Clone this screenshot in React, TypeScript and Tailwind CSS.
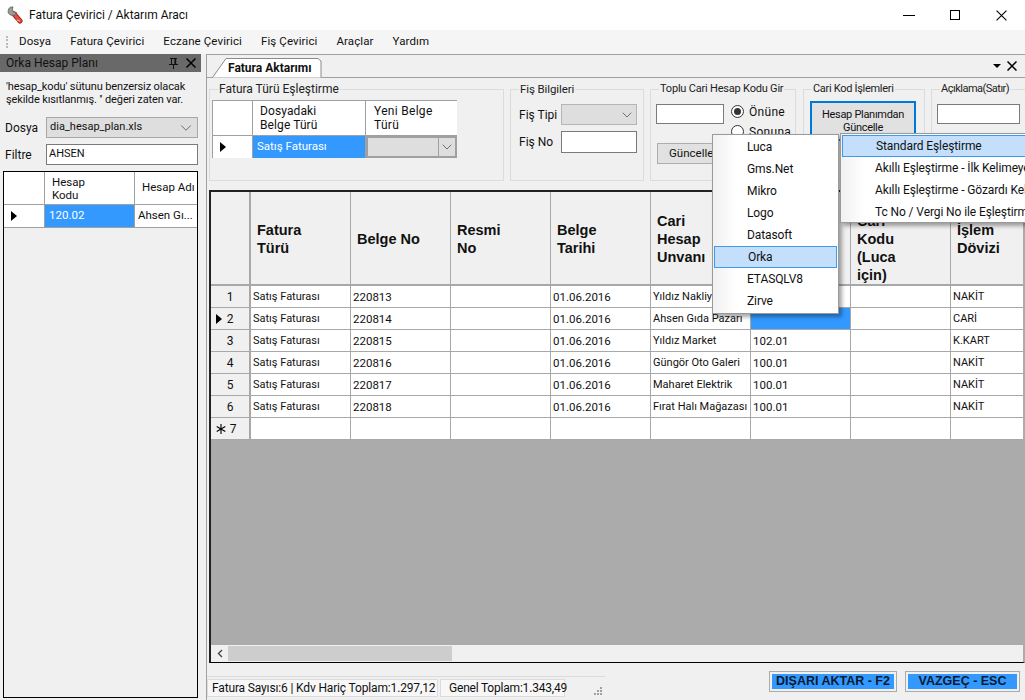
import { ChevronDown } from "lucide-react"

const menu = ["Dosya", "Fatura Çevirici", "Eczane Çevirici", "Fiş Çevirici", "Araçlar", "Yardım"]

const rows = [
  { n: "1", no: "220813", name: "Yıldız Nakliyat", code: "", doviz: "NAKİT" },
  { n: "2", no: "220814", name: "Ahsen Gıda Pazarı", code: "", doviz: "CARİ" },
  { n: "3", no: "220815", name: "Yıldız Market", code: "102.01", doviz: "K.KART" },
  { n: "4", no: "220816", name: "Güngör Oto Galeri", code: "100.01", doviz: "NAKİT" },
  { n: "5", no: "220817", name: "Maharet Elektrik", code: "100.01", doviz: "NAKİT" },
  { n: "6", no: "220818", name: "Fırat Halı Mağazası", code: "100.01", doviz: "NAKİT" },
]

const headers = ["Fatura\nTürü", "Belge No", "Resmi\nNo", "Belge\nTarihi", "Cari\nHesap\nUnvanı", "Cari\nHesap\nKodu", "Yeni\nCari\nKodu\n(Luca\niçin)", "İşlem\nDövizi"]

const programs = ["Luca", "Gms.Net", "Mikro", "Logo", "Datasoft", "Orka", "ETASQLV8", "Zirve"]
const matchings = ["Standard Eşleştirme", "Akıllı Eşleştirme - İlk Kelimeye Göre", "Akıllı Eşleştirme - Gözardı Kelimeler", "Tc No / Vergi No ile Eşleştirme"]

function Arrow() {
  return <span className="block w-0 h-0 border-y-[5px] border-y-transparent border-l-[6px] border-l-black" />
}

function Wrench() {
  return (
    <svg width="16" height="18" viewBox="0 0 16 18" fill="none">
      <path d="M7 8 L13 15" stroke="#a82a1e" strokeWidth="5" strokeLinecap="round" />
      <path d="M7 8 L13 15" stroke="#e2503c" strokeWidth="3" strokeLinecap="round" />
      <path d="M9.5 14 L13 15" stroke="#f4b0b8" strokeWidth="1" />
      <path d="M6 1 A4.2 4.2 0 1 0 9.4 6.4 L6.4 6 L5.4 3.4 Z" fill="#9a9a9a" stroke="#5c5c5c" strokeWidth="0.8" />
    </svg>
  )
}

function Cross({ size, width }: { size: number; width: number }) {
  return (
    <svg width={size} height={size} viewBox="0 0 10 10" stroke="#000" strokeWidth={width}>
      <path d="M0.5 0.5 L9.5 9.5 M9.5 0.5 L0.5 9.5" />
    </svg>
  )
}

function PinIcon() {
  return (
    <svg width="9" height="11" viewBox="0 0 9 11" fill="none" stroke="#111" strokeWidth="1">
      <path d="M1 0.5 H8 M2.5 0.5 V6.5 M6 0.5 V6.5 M0 6.5 H9 M4.5 6.5 V11" />
      <path d="M6.5 1 V6" strokeWidth="1.4" />
    </svg>
  )
}

function Group({ title, className, legend, children }: { title: string; className: string; legend: string; children?: React.ReactNode }) {
  return (
    <fieldset className={`border border-[#dcdcdc] shrink-0 min-w-0 h-[99px] ${className}`}>
      <legend className={`ml-2 px-[1px] leading-[14px] text-[#222] whitespace-nowrap ${legend}`}>{title}</legend>
      {children}
    </fieldset>
  )
}

function Menu({ items, active, className, rowClass, gutter }: { items: string[]; active: number; className: string; rowClass: string; gutter: string }) {
  return (
    <div className={`absolute bg-white border border-[#9a9a9a] shadow-[3px_3px_4px_rgba(0,0,0,0.35)] p-[1px] overflow-hidden ${className}`}>
      <div className={`absolute left-0 top-0 bottom-0 bg-gradient-to-r from-[#f1f1f1] to-white ${gutter}`} />
      {items.map((item, i) => (
        <div
          key={item}
          className={`relative h-[22px] flex items-center whitespace-nowrap tracking-[-0.1px] ${rowClass} ${i === active ? "bg-[#c4dffb] border border-[#3f9be8]" : ""}`}
        >
          {item}
        </div>
      ))}
    </div>
  )
}

export default function App() {
  return (
    <div className="relative w-[1025px] h-[700px] overflow-hidden bg-[#f0f0f0] font-['Roboto',sans-serif] text-[12px] text-[#111]">
      {/* title bar */}
      <div className="h-[30px] bg-white flex items-center pl-[7px]">
        <Wrench />
        <span className="ml-[6px]">Fatura Çevirici / Aktarım Aracı</span>
        <div className="ml-auto flex items-center">
          <div className="w-[46px] flex justify-center"><div className="w-[12px] h-[1px] bg-black" /></div>
          <div className="w-[46px] flex justify-center"><div className="w-[10px] h-[10px] border border-black" /></div>
          <div className="w-[46px] flex justify-center mr-[1px]"><Cross size={11} width={1} /></div>
        </div>
      </div>

      {/* menu */}
      <div className="h-[24px] bg-[#f5f5f5] flex items-center gap-[19px] pl-[19px] relative text-[11.5px]">
        <div className="absolute left-[6px] top-[6px] h-[12px] w-[2px] border-l-2 border-dotted border-[#bbb]" />
        {menu.map((m) => (
          <span key={m} className="tracking-[0.1px]">{m}</span>
        ))}
      </div>

      <div className="flex h-[646px]">
        {/* left panel */}
        <div className="w-[203px] shrink-0 flex flex-col">
          <div className="h-[18px] w-[201px] bg-[#696969] flex items-center pl-[6px] pr-[5px]">
            <span>Orka Hesap Planı</span>
            <span className="ml-auto mr-[8px]"><PinIcon /></span>
            <Cross size={10} width={1.5} />
          </div>
          <div className="pl-[6px] pt-[8px] leading-[13px] h-[45px] whitespace-nowrap text-[11px] tracking-[-0.12px]">
            'hesap_kodu' sütunu benzersiz olacak<br />şekilde kısıtlanmış. '' değeri zaten var.
          </div>
          <div className="flex items-center h-[21px] pl-[5px] pr-[5px]">
            <span className="w-[41px]">Dosya</span>
            <div className="flex-1 h-[21px] bg-[#dedede] border border-[#a8a8a8] flex items-center pl-[3px] pr-[2px] text-[11px]">
              <span>dia_hesap_plan.xls</span>
              <ChevronDown size={18} strokeWidth={1.1} className="ml-auto text-[#555]" />
            </div>
          </div>
          <div className="flex items-center h-[21px] mt-[6px] pl-[5px] pr-[5px]">
            <span className="w-[41px]">Filtre</span>
            <div className="flex-1 h-[21px] bg-white border border-[#7a7a7a] flex items-center pl-[2px] text-[11px]">AHSEN</div>
          </div>
          <div className="mt-[6px] ml-[3px] mr-[5px] h-[527px] border border-black bg-[#f0f0f0]">
            <div className="grid grid-cols-[41px_90px_1fr] h-[33px] bg-white border-b border-[#a0a0a0] text-[11.5px]">
              <div className="border-r border-[#a0a0a0]" />
              <div className="border-r border-[#a0a0a0] pl-[7px] pt-[4px] leading-[13px]">Hesap<br />Kodu</div>
              <div className="flex items-center pl-[7px]">Hesap Adı</div>
            </div>
            <div className="grid grid-cols-[41px_90px_1fr] h-[23px] bg-white border-b border-[#a0a0a0] text-[11.5px]">
              <div className="border-r border-[#a0a0a0] flex items-center pl-[7px]"><Arrow /></div>
              <div className="bg-[#3399ff] text-white border-r border-[#a0a0a0] flex items-center pl-[4px]">120.02</div>
              <div className="flex items-center pl-[3px] whitespace-nowrap overflow-hidden">Ahsen Gı...</div>
            </div>
          </div>
        </div>

        {/* right panel */}
        <div className="flex-1 min-w-0 ml-[3px] flex flex-col border-t border-l border-[#a0a0a0]">
          {/* tab strip */}
          <div className="h-[23px] shrink-0 border-b border-[#a0a0a0] flex items-end pl-[5px] relative">
            <div className="relative h-[20px] w-[110px] -mb-[1px] flex items-center pl-[16px] font-bold">
              <svg className="absolute inset-0" width="110" height="20" viewBox="0 0 110 20">
                <path d="M0.5 19.5 L14 0.5 H106 L109 3 V19.5" fill="#fff" stroke="#8a8a8a" />
              </svg>
              <span className="relative">Fatura Aktarımı</span>
            </div>
            <div className="absolute right-[8px] top-[6px] flex items-center gap-[6px]">
              <span className="w-0 h-0 border-x-[4px] border-x-transparent border-t-[4px] border-t-black" />
              <Cross size={10} width={1.5} />
            </div>
          </div>

          {/* group boxes */}
          <div className="h-[112px] shrink-0 pl-[2px] pt-[4px] flex items-start gap-[6px]">
            <Group title="Fatura Türü Eşleştirme" legend="" className="w-[295px]">
              <div className="ml-[2px] mt-[4px] w-[245px] border-t border-l border-[#a0a0a0]">
                <div className="grid grid-cols-[40px_113px_91px] h-[35px] bg-white border-b border-[#a0a0a0]">
                  <div className="border-r border-[#a0a0a0]" />
                  <div className="border-r border-[#a0a0a0] pl-[7px] pt-[3px] leading-[14px] tracking-[0.1px]">Dosyadaki<br />Belge Türü</div>
                  <div className="pl-[8px] pt-[3px] leading-[14px] tracking-[0.3px]">Yeni Belge<br />Türü</div>
                </div>
                <div className="grid grid-cols-[40px_113px_91px] h-[22px]">
                  <div className="bg-white border-r border-[#a0a0a0] flex items-center pl-[7px]"><Arrow /></div>
                  <div className="bg-[#3399ff] text-white flex items-center pl-[4px] border-r border-[#a0a0a0] text-[11.5px]">Satış Faturası</div>
                  <div className="bg-[#dedede] border-2 border-[#a0a0a0] flex items-center justify-end">
                    <div className="w-[17px] h-full border-l border-[#a0a0a0] flex items-center justify-center"><ChevronDown size={16} strokeWidth={1.2} className="text-[#555]" /></div>
                  </div>
                </div>
              </div>
            </Group>
            <Group title="Fiş Bilgileri" legend="text-[11.5px] tracking-[-0.1px]" className="w-[134px]">
              <div className="pl-[8px] pr-[6px] pt-[8px]">
                <div className="flex items-center h-[21px]">
                  <span className="w-[42px]">Fiş Tipi</span>
                  <div className="flex-1 h-[21px] bg-[#dedede] border border-[#b5b5b5] flex items-center justify-end pr-[1px]"><ChevronDown size={16} strokeWidth={1.2} className="text-[#555]" /></div>
                </div>
                <div className="flex items-center h-[22px] mt-[6px]">
                  <span className="w-[42px]">Fiş No</span>
                  <div className="flex-1 h-[22px] bg-white border border-[#7a7a7a]" />
                </div>
              </div>
            </Group>
            <Group title="Toplu Cari Hesap Kodu Gir" legend="text-[11px] tracking-[-0.2px]" className="w-[146px]">
              <div className="pl-[5px] pt-[8px] flex gap-[7px]">
                <div className="w-[68px] h-[20px] bg-white border border-[#7a7a7a]" />
                <div className="flex flex-col gap-[7px] pt-[1px]">
                  <div className="flex items-center gap-[5px] h-[13px]">
                    <span className="w-[13px] h-[13px] rounded-full border border-[#333] bg-white flex items-center justify-center"><span className="w-[7px] h-[7px] rounded-full bg-[#333]" /></span>
                    <span className="tracking-[0.3px]">Önüne</span>
                  </div>
                  <div className="flex items-center gap-[5px] h-[13px]">
                    <span className="w-[13px] h-[13px] rounded-full border border-[#333] bg-white" />
                    <span className="tracking-[0.3px]">Sonuna</span>
                  </div>
                </div>
              </div>
              <div className="ml-[6px] mt-[5px] w-[100px] h-[21px] bg-[#e1e1e1] border border-[#adadad] flex items-center pl-[11px] text-[11.5px]">Güncelle</div>
            </Group>
            <Group title="Cari Kod İşlemleri" legend="text-[11px] tracking-[-0.3px]" className="w-[122px] ml-[1px]">
              <div className="ml-[6px] mt-[5px] w-[106px] h-[40px] bg-[#e1e1e1] border-2 border-[#0078d7] flex items-center justify-center text-center leading-[13px] text-[11px] tracking-[-0.3px]">
                Hesap Planımdan<br />Güncelle
              </div>
            </Group>
            <Group title="Açıklama(Satır)" legend="text-[11px] tracking-[-0.5px]" className="w-[120px]">
              <div className="ml-[5px] mt-[8px] w-[83px] h-[20px] bg-white border border-[#7a7a7a]" />
            </Group>
          </div>

          {/* main grid */}
          <div className="ml-[2px] h-[473px] shrink-0 border-t-2 border-x-2 border-b border-t-[#222] border-l-[#222] border-r-transparent border-b-black bg-[#ababab] flex flex-col overflow-hidden">
            <div className="flex-1 min-h-0">
              <div className="grid grid-cols-[40px_repeat(8,100px)] w-[840px] bg-white">
                <div className="h-[94px] bg-[#f0f0f0] border-r-2 border-b-2 border-[#a8a8a8]" />
                {headers.map((h) => (
                  <div key={h} className="h-[94px] bg-[#f0f0f0] border-r border-b-2 border-[#a8a8a8] flex items-center pl-[6px] pt-[2px] whitespace-pre-line font-['Liberation_Sans',sans-serif] font-bold text-[14.5px] leading-[18px]">
                    {h}
                  </div>
                ))}
                {rows.map((r) => (
                  <div key={r.n} className="contents">
                    <div className="h-[22px] bg-[#f0f0f0] border-r-2 border-b border-[#a8a8a8] flex items-center relative justify-center">
                      {r.n === "2" && <span className="absolute left-[5px]"><Arrow /></span>}
                      {r.n}
                    </div>
                    <div className="h-[22px] border-r border-b border-[#a8a8a8] flex items-center pl-[2px] pt-[2px] text-[11px]">Satış Faturası</div>
                    <div className="h-[22px] border-r border-b border-[#a8a8a8] flex items-center pl-[2px] pt-[2px] text-[11.5px]">{r.no}</div>
                    <div className="h-[22px] border-r border-b border-[#a8a8a8]" />
                    <div className="h-[22px] border-r border-b border-[#a8a8a8] flex items-center pl-[2px] pt-[2px] text-[11.5px]">01.06.2016</div>
                    <div className="h-[22px] border-r border-b border-[#a8a8a8] flex items-center pl-[2px] pt-[2px] text-[11px] whitespace-nowrap overflow-hidden">{r.name}</div>
                    <div className={`h-[22px] border-r border-b border-[#a8a8a8] flex items-center pl-[2px] pt-[2px] text-[11.5px] ${r.n === "2" ? "bg-[#3399ff]" : ""}`}>{r.code}</div>
                    <div className="h-[22px] border-r border-b border-[#a8a8a8]" />
                    <div className="h-[22px] border-r border-b border-[#a8a8a8] flex items-center pl-[2px] pt-[2px] text-[11px]">{r.doviz}</div>
                  </div>
                ))}
                <div className="h-[22px] bg-[#f0f0f0] border-r-2 border-b border-[#a8a8a8] flex items-center relative justify-center">
                  <svg className="absolute left-[5px]" width="10" height="10" viewBox="0 0 10 10" stroke="#000" strokeWidth="1.1">
                    <path d="M5 0 V10 M0.7 2.5 L9.3 7.5 M9.3 2.5 L0.7 7.5" />
                  </svg>
                  <span className="pl-[6px]">7</span>
                </div>
                {[0, 1, 2, 3, 4, 5, 6, 7].map((i) => (
                  <div key={i} className="h-[22px] border-r border-b border-[#a8a8a8]" />
                ))}
              </div>
            </div>
            <div className="h-[17px] shrink-0 bg-[#f0f0f0] flex items-center">
              <span className="w-[17px] flex justify-center">
                <svg width="6" height="9" viewBox="0 0 6 9" fill="none" stroke="#444" strokeWidth="1.4"><path d="M5 1 L1.5 4.5 L5 8" /></svg>
              </span>
              <div className="w-[224px] h-[15px] bg-[#cdcdcd]" />
            </div>
          </div>

          {/* status + buttons */}
          <div className="flex-1 flex items-start pt-[7px] border-t border-[#f0f0f0]">
            <div className="mt-[5px] w-[398px] relative border-t border-[#dcdcdc] pt-[2px] flex gap-[2px]">
              <div className="h-[18px] w-[231px] shrink-0 flex items-center pl-[4px] border border-[#dcdcdc] bg-[#f7f7f7] whitespace-nowrap tracking-[-0.15px]">Fatura Sayısı:6 | Kdv Hariç Toplam:1.297,12</div>
              <div className="h-[18px] w-[125px] shrink-0 flex items-center pl-[8px] border border-[#dcdcdc] bg-[#f7f7f7] whitespace-nowrap tracking-[-0.2px]">Genel Toplam:1.343,49</div>
              <svg className="absolute right-[2px] bottom-[1px]" width="9" height="9" viewBox="0 0 9 9" fill="#a0a0a0">
                <rect x="6" y="0" width="2" height="2" />
                <rect x="3" y="3" width="2" height="2" />
                <rect x="6" y="3" width="2" height="2" />
                <rect x="0" y="6" width="2" height="2" />
                <rect x="3" y="6" width="2" height="2" />
                <rect x="6" y="6" width="2" height="2" />
              </svg>
            </div>
            <div className="ml-auto mr-[5px] flex gap-[8px] font-['Liberation_Sans',sans-serif] font-bold text-[12.5px]">
              <div className="w-[128px] h-[21px] border-2 border-[#ababab] bg-[#3399ff] outline-2 outline-[#f0f0f0] outline-offset-[-3px] flex items-center justify-center text-[#0a1a33]">DIŞARI AKTAR - F2</div>
              <div className="w-[115px] h-[21px] border-2 border-[#ababab] bg-[#3399ff] outline-2 outline-[#f0f0f0] outline-offset-[-3px] flex items-center justify-center text-[#0a1a33]">VAZGEÇ - ESC</div>
            </div>
          </div>
        </div>
      </div>

      <Menu items={programs} active={5} className="left-[712px] top-[134px] w-[127px] h-[180px] pt-[1px]" rowClass="pl-[33px]" gutter="w-[24px]" />
      <Menu items={matchings} active={0} className="left-[840px] top-[133px] w-[200px] h-[90px] p-0" rowClass="pl-[33px]" gutter="w-[24px]" />
    </div>
  )
}
